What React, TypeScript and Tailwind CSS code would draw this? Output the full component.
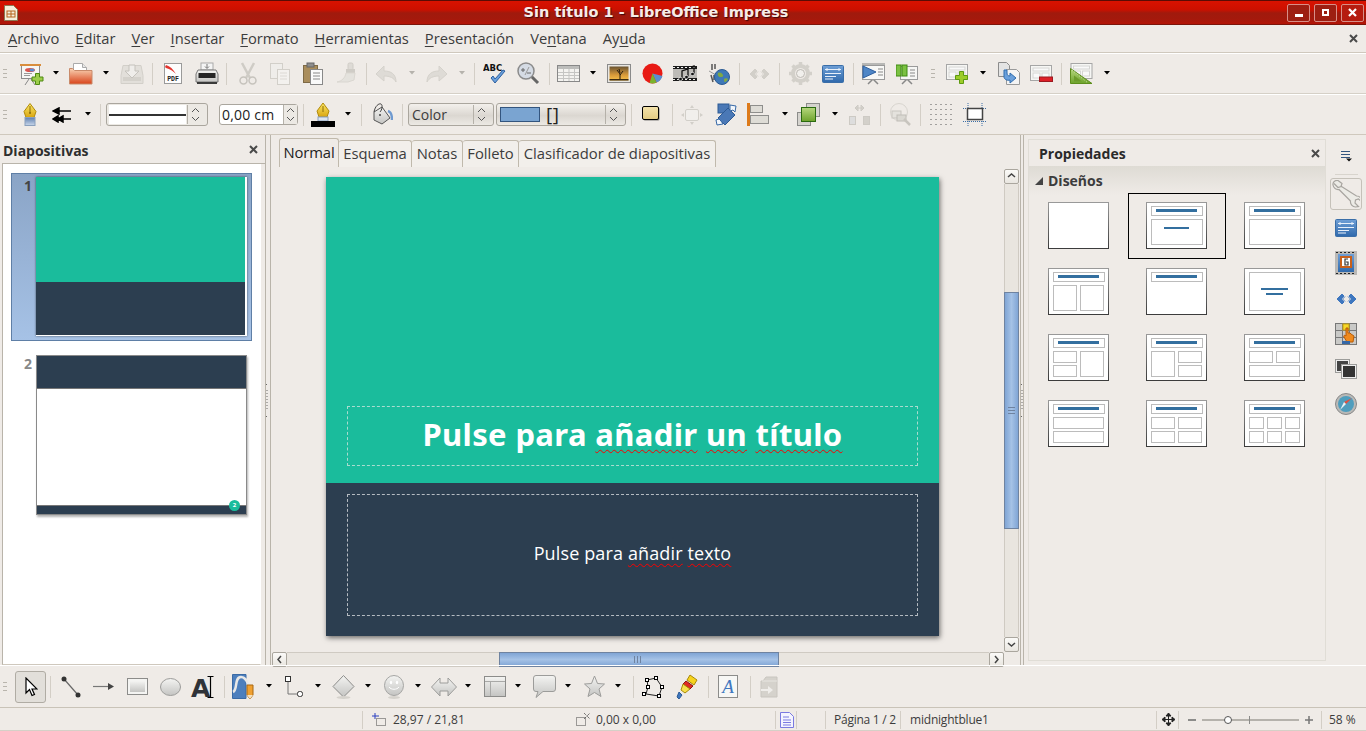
import type { ReactNode } from 'react';
import clsx from 'clsx';

type IconProps = { className?: string };

function Svg({ w, h, className, children }: { w: number; h: number; className?: string; children: ReactNode }) {
    return (
        <svg width={w} height={h} viewBox={`0 0 ${w} ${h}`} className={clsx('shrink-0', className)}>
            {children}
        </svg>
    );
}

/* shared gradients, referenced by the icons below */
function Defs() {
    return (
        <svg width="0" height="0" className="absolute">
            <defs>
                <linearGradient id="lay" x1="0" y1="0" x2="0" y2="1">
                    <stop offset="0" stopColor="#999" />
                    <stop offset="1" stopColor="#3c3c3c" />
                </linearGradient>
                <linearGradient id="folder" x1="0" y1="0" x2="0" y2="1">
                    <stop offset="0" stopColor="#f9d3b4" />
                    <stop offset="1" stopColor="#d8431a" />
                </linearGradient>
                <linearGradient id="tile" x1="0" y1="0" x2="0" y2="1">
                    <stop offset="0" stopColor="#f4f4f2" />
                    <stop offset="1" stopColor="#c4c4c2" />
                </linearGradient>
                <linearGradient id="blueP" x1="0" y1="0" x2="0" y2="1">
                    <stop offset="0" stopColor="#6f9fd6" />
                    <stop offset="1" stopColor="#2f69ac" />
                </linearGradient>
                <linearGradient id="sunset" x1="0" y1="0" x2="0" y2="1">
                    <stop offset="0" stopColor="#6a5330" />
                    <stop offset="0.6" stopColor="#d89a3a" />
                    <stop offset="1" stopColor="#f6c04a" />
                </linearGradient>
                <linearGradient id="greenT" x1="0" y1="0" x2="0" y2="1">
                    <stop offset="0" stopColor="#b6d77e" />
                    <stop offset="1" stopColor="#6ea32c" />
                </linearGradient>
                <linearGradient id="penY" x1="0" y1="0" x2="0" y2="1">
                    <stop offset="0" stopColor="#fbe869" />
                    <stop offset="1" stopColor="#d9a50f" />
                </linearGradient>
                <linearGradient id="penB" x1="0" y1="0" x2="0" y2="1">
                    <stop offset="0" stopColor="#5f7fb0" />
                    <stop offset="1" stopColor="#c9d7ea" />
                </linearGradient>
                <linearGradient id="yel" x1="0" y1="0" x2="0" y2="1">
                    <stop offset="0" stopColor="#f4e3ac" />
                    <stop offset="1" stopColor="#e3cb82" />
                </linearGradient>
            </defs>
        </svg>
    );
}

function Grip({ className }: IconProps) {
    return (
        <Svg w={4} h={9} className={className}>
            <path d="M0 .5h4M0 4.500h4M0 8.500h4" stroke="#b9b5ad" />
        </Svg>
    );
}

function Drop({ className, off }: IconProps & { off?: boolean }) {
    return (
        <Svg w={6} h={4} className={clsx('mb-[2px]', className)}>
            <path d="M0 0h6L3 3.500z" fill={off ? '#b5b2ac' : '#000'} />
        </Svg>
    );
}

function Sep({ className }: IconProps) {
    return <div className={clsx('h-[22px] w-px shrink-0 bg-[#d3cec6]', className)} />;
}

function Close({ className }: IconProps) {
    return (
        <Svg w={9} h={9} className={className}>
            <path d="M1 1l7 7M8 1l-7 7" stroke="#4a4a4a" strokeWidth="2" />
        </Svg>
    );
}

function Chevrons() {
    return (
        <Svg w={9} h={15}>
            <path d="M1 5l3.500-3.500L8 5M1 10l3.500 3.500L8 10" fill="none" stroke="#555" />
        </Svg>
    );
}

/* ---- first toolbar ---- */
function NewPres({ className }: IconProps) {
    return (
        <Svg w={24} h={24} className={className}>
            <path d="M9 17l-4 6M11 17l4 6" stroke="#888" />
            <rect x="1.500" y="3.500" width="18" height="13" fill="#f6f6f4" stroke="#8c8c8c" />
            <rect x="0" y="2" width="21" height="2" fill="#d98d3c" />
            <ellipse cx="10" cy="8" rx="5" ry="2" fill="#d9554f" />
            <ellipse cx="12" cy="8" rx="2.500" ry="1.500" fill="#5a8fcf" />
            <path d="M4 11.500h8M4 13.500h6" stroke="#999" />
            <path d="M15.500 11.500h4v3.500h3.500v4h-3.500v3.500h-4v-3.500H12v-4h3.500z" fill="#9ccc4a" stroke="#4f8a12" />
        </Svg>
    );
}

function OpenFolder({ className }: IconProps) {
    return (
        <Svg w={24} h={24} className={className}>
            <path d="M4.500 1.500h9l4 4v8h-13z" fill="#fff" stroke="#aaa" />
            <path d="M13.500 1.500v4h4" fill="#e8e8e8" stroke="#aaa" />
            <path d="M.5 6.500h3l2 2h17.500v13.500H.5z" fill="url(#folder)" stroke="#c98a6a" />
        </Svg>
    );
}

function SaveOff({ className }: IconProps) {
    return (
        <Svg w={24} h={24} className={className}>
            <path d="M3 3.500h18l2 10v8H1v-8z" fill="#e2dfda" stroke="#d2cfc9" />
            <rect x="3" y="15" width="18" height="4" fill="#d4d1cb" />
            <path d="M9 3h6v6h4l-7 7-7-7h4z" fill="#efedea" stroke="#c5c2bc" />
        </Svg>
    );
}

function Pdf({ className }: IconProps) {
    return (
        <Svg w={18} h={21} className={className}>
            <rect x=".5" y=".5" width="17" height="20" fill="#fdfdfd" stroke="#9a9a9a" />
            <path d="M2 2c4 1 7 4 10 9-3-3-6-5-10-6l-1-1z" fill="#e3352f" />
            <text x="9" y="18" textAnchor="middle" fontSize="6.500" fontWeight="700" fontFamily="Liberation Mono, monospace" fill="#222">PDF</text>
        </Svg>
    );
}

function Printer({ className }: IconProps) {
    return (
        <Svg w={24} h={23} className={className}>
            <rect x="6" y="1" width="12" height="7" fill="#f4f4f4" stroke="#aaa" />
            <path d="M12 2v4M10 4.500l2 2 2-2" stroke="#777" fill="none" />
            <path d="M3 8h18l2 4v8H1v-8z" fill="url(#tile)" stroke="#777" />
            <rect x="3.500" y="11" width="17" height="5" fill="#262626" />
            <rect x="2" y="20" width="20" height="2" fill="#3a3a3a" />
        </Svg>
    );
}

function Cut({ className }: IconProps) {
    return (
        <Svg w={18} h={23} className={className}>
            <path d="M3 1l8 15M15 1L7 16" stroke="#cfccc6" strokeWidth="2.500" />
            <ellipse cx="4.500" cy="18.500" rx="3.500" ry="3.500" fill="none" stroke="#c6c3bd" strokeWidth="1.500" />
            <ellipse cx="13.500" cy="18.500" rx="3.500" ry="3.500" fill="none" stroke="#c6c3bd" strokeWidth="1.500" />
        </Svg>
    );
}

function Copy({ className }: IconProps) {
    return (
        <Svg w={20} h={22} className={className}>
            <rect x=".5" y=".5" width="12" height="15" fill="#efedea" stroke="#d2cfc9" />
            <rect x="7.500" y="6.500" width="12" height="15" fill="#f3f1ee" stroke="#d2cfc9" />
            <path d="M10 10h7M10 13h7M10 16h7" stroke="#dcd9d4" />
        </Svg>
    );
}

function Paste({ className }: IconProps) {
    return (
        <Svg w={20} h={23} className={className}>
            <rect x=".5" y="3.500" width="14" height="17" fill="#a98d5c" stroke="#7e6a46" />
            <rect x="4" y="1" width="7" height="4" fill="#8e8e8e" stroke="#666" />
            <rect x="7.500" y="7.500" width="12" height="15" fill="#fafafa" stroke="#888" />
            <path d="M10 11h7M10 14h7M10 17h7" stroke="#888" />
        </Svg>
    );
}

function Brush({ className }: IconProps) {
    return (
        <Svg w={20} h={23} className={className}>
            <rect x="12" y="1" width="5" height="7" rx="1.500" fill="#dedbd6" stroke="#cfccc6" />
            <rect x="10" y="7" width="9" height="4" fill="#cfccc6" />
            <path d="M10 11h9l-1 7-6 2H1c5-1 8-4 9-9z" fill="#e4e2dd" stroke="#dad7d1" />
        </Svg>
    );
}

function Undo({ className, flip }: IconProps & { flip?: boolean }) {
    return (
        <Svg w={22} h={18} className={className}>
            <path
                d="M1 9l8-8v5c7 0 12 3 12 11-2-4-6-6-12-6v5z"
                fill="#dedbd6"
                stroke="#d5d2cc"
                transform={flip ? 'matrix(-1 0 0 1 22 0)' : undefined}
            />
        </Svg>
    );
}

function Spell({ className }: IconProps) {
    return (
        <Svg w={24} h={22} className={className}>
            <text x="0" y="8" fontSize="8.500" fontWeight="700" fontFamily="DejaVu Sans, sans-serif" fill="#111">ABC</text>
            <path d="M8 15l4 5L22 8l-2-1-8 9-2-3z" fill="#6aa0dc" stroke="#2d5f9f" />
        </Svg>
    );
}

function ZoomOff({ className }: IconProps) {
    return (
        <Svg w={23} h={23} className={className}>
            <path d="M14 14l7 7" stroke="#666" strokeWidth="3" />
            <circle cx="9" cy="9" r="8" fill="#d5dbe4" stroke="#8b8b8b" strokeWidth="1.500" />
            <path d="M4 8h4M6 6v4M10 11h4" stroke="#666" />
            <path d="M12 5l-4 8" stroke="#999" />
        </Svg>
    );
}

function TableIc({ className }: IconProps) {
    return (
        <Svg w={23} h={17} className={className}>
            <rect x=".5" y=".5" width="22" height="16" fill="#f4f3f0" stroke="#888" />
            <rect x="1" y="1" width="21" height="3" fill="#bdbdbb" />
            <path d="M1 7.500h21M1 10.500h21M1 13.500h21M6.500 4v12M12 4v12M17.500 4v12" stroke="#c5c5c3" />
        </Svg>
    );
}

function ImageIc({ className }: IconProps) {
    return (
        <Svg w={24} h={19} className={className}>
            <rect x=".5" y=".5" width="23" height="18" fill="#e8e6e2" stroke="#8a8a8a" />
            <rect x="2.500" y="2.500" width="19" height="14" fill="url(#sunset)" />
            <path d="M13 16v-6l-3-4M13 11l3-4M13 9l-1-4" stroke="#241a0c" strokeWidth="1" fill="none" />
            <rect x="2.500" y="15" width="19" height="1.500" fill="#3a2a12" />
        </Svg>
    );
}

function Pie({ className }: IconProps) {
    return (
        <Svg w={21} h={21} className={className}>
            <circle cx="10.500" cy="10.500" r="10" fill="#e81a14" />
            <path d="M10.500 10.500L20.500 13a10 10 0 0 1-6 6.500z" fill="#5b8fcf" />
            <path d="M10.500 10.500l4 9a10 10 0 0 1-7 .5z" fill="#7ab32e" />
        </Svg>
    );
}

function Film({ className }: IconProps) {
    return (
        <Svg w={24} h={21} className={className}>
            <rect x="0" y="3" width="24" height="15" fill="#bdbbb7" />
            <path d="M0 4.500h24M0 16.500h24" stroke="#1c1c1c" strokeWidth="3" />
            <path d="M0 4.500h24M0 16.500h24" stroke="#f2f2f0" strokeDasharray="2 2" />
            <path d="M9 16V8l6-2v8M21 11V3l-3 1" fill="none" stroke="#111" strokeWidth="1.300" />
            <ellipse cx="7.500" cy="16" rx="2" ry="1.600" fill="#111" stroke="#fff" strokeWidth="0.600" />
            <ellipse cx="13.500" cy="14" rx="2" ry="1.600" fill="#111" stroke="#fff" strokeWidth="0.600" />
            <ellipse cx="19.500" cy="11" rx="2" ry="1.600" fill="#111" stroke="#fff" strokeWidth="0.600" />
        </Svg>
    );
}

function Globe({ className }: IconProps) {
    return (
        <Svg w={21} h={22} className={className}>
            <path d="M3 1v6M6 1v5M2 12l2 7M5 12v5" stroke="#555" strokeWidth="1.500" />
            <path d="M0 8l7 4" stroke="#999" />
            <circle cx="13" cy="14" r="7.500" fill="#3d78b8" stroke="#2c5b93" />
            <path d="M9 10c2-1 4 0 5 2s-2 2-3 2-3-2-2-4zM15 16c1-1 3-1 4 0-1 2-2 3-3 3s-1-2-1-3z" fill="#7fa844" />
        </Svg>
    );
}

function CodeOff({ className, color = '#d2cfc9' }: IconProps & { color?: string }) {
    return (
        <Svg w={21} h={12} className={className}>
            <path d="M6 1L1 6l5 5 2-2-3-3 3-3zM15 1l5 5-5 5-2-2 3-3-3-3z" fill={color} stroke={color} />
            <path d="M9 3.500L6.500 6 9 8.500M12 3.500L14.500 6 12 8.500" fill="none" stroke={color} />
        </Svg>
    );
}

function Gear({ className }: IconProps) {
    return (
        <Svg w={23} h={23} className={className}>
            <circle cx="11.500" cy="11.500" r="7.500" fill="none" stroke="#d3d0ca" strokeWidth="4" />
            <path
                d="M11.500 0v4M11.500 19v4M0 11.500h4M19 11.500h4M3.500 3.500l3 3M16.500 16.500l3 3M19.500 3.500l-3 3M6.500 16.500l-3 3"
                stroke="#d3d0ca"
                strokeWidth="3.500"
            />
            <circle cx="11.500" cy="11.500" r="4" fill="#f1efec" stroke="#bdbab4" />
        </Svg>
    );
}

function BluePanel({ className }: IconProps) {
    return (
        <Svg w={22} h={18} className={className}>
            <rect x=".5" y=".5" width="21" height="17" rx="1" fill="url(#blueP)" stroke="#3a6ea8" />
            <path d="M3 4.500h16M3 8.500h16M3 11.500h11M3 14h8" stroke="#e8f0fa" />
            <path d="M5 3v3M17 3v3" stroke="#e8f0fa" />
        </Svg>
    );
}

function PresentIc({ className }: IconProps) {
    return (
        <Svg w={23} h={23} className={className}>
            <path d="M11 17l-5 5M11 17l5 5" stroke="#888" strokeWidth="1.500" />
            <rect x=".5" y="3.500" width="22" height="14" fill="#f8f8f6" stroke="#9a9a9a" />
            <rect x="0" y="1" width="23" height="2" fill="#b8b8b6" />
            <path d="M1 4l13 6-13 6z" fill="#4f86c6" stroke="#2d5f9f" />
            <path d="M16 7h5M16 10h5M16 13h5" stroke="#888" />
        </Svg>
    );
}

function SortIc({ className }: IconProps) {
    return (
        <Svg w={22} h={23} className={className}>
            <path d="M11 17l-5 5M11 17l5 5" stroke="#888" strokeWidth="1.500" />
            <rect x="4.500" y="4.500" width="17" height="13" fill="#f6f6f4" stroke="#9a9a9a" />
            <rect x="0" y="3" width="5" height="11" fill="#7bc142" stroke="#3f8a12" />
            <rect x="6" y="3" width="5" height="11" fill="#7bc142" stroke="#3f8a12" />
            <path d="M14 8h5M14 11h5M14 14h5" stroke="#888" />
        </Svg>
    );
}

function SlideBox() {
    return (
        <>
            <rect x=".5" y=".5" width="21" height="15" fill="#f6f6f4" stroke="#a6a6a6" strokeWidth="1" />
            <rect x="3" y="3" width="16" height="3" fill="#f9f9f9" stroke="#d5d5d3" />
            <rect x="3" y="8" width="7" height="5" fill="#f9f9f9" stroke="#d5d5d3" />
            <rect x="12" y="8" width="7" height="5" fill="#f9f9f9" stroke="#d5d5d3" />
        </>
    );
}

function NewSlide({ className }: IconProps) {
    return (
        <Svg w={23} h={20} className={className}>
            <SlideBox />
            <path d="M13.500 7.500h4v4h4v4h-4v4h-4v-4h-4v-4h4z" fill="#9ccc2a" stroke="#5d9a10" />
        </Svg>
    );
}

function DupSlide({ className }: IconProps) {
    return (
        <Svg w={22} h={23} className={className}>
            <path d="M.5 .5h8l3 3v11H.5z" fill="#e4e4e4" stroke="#8c8c8c" />
            <path d="M8.500 7.500h10l3 3v12h-13z" fill="#f4f4f4" stroke="#9a9a9a" />
            <path d="M6 8v7c0 2 3 4 6 3v3l6-5-6-5v3c-2 0-3-1-3-3V8z" fill="#6aa0dc" stroke="#2f6cae" />
        </Svg>
    );
}

function DelSlide({ className }: IconProps) {
    return (
        <Svg w={23} h={17} className={className}>
            <SlideBox />
            <rect x="9.500" y="12" width="13" height="4.500" fill="#dd1f27" stroke="#9c1a20" />
        </Svg>
    );
}

function TriSlide({ className }: IconProps) {
    return (
        <Svg w={23} h={22} className={className}>
            <g transform="translate(0.5 0)">
                <SlideBox />
            </g>
            <path d="M.5 5.500l21.500 15H.5z" fill="url(#greenT)" stroke="#5d8e1c" />
            <path d="M4 12.500l8 6H4z" fill="#6c9b2c" />
            <path d="M2 7l16 13" stroke="#d5e8b5" strokeDasharray="1 2" />
        </Svg>
    );
}

/* ---- second toolbar ---- */
function Pen({ className }: IconProps) {
    return (
        <Svg w={16} h={23} className={className}>
            <path d="M8 .5l6 8-2 6H4l-2-6z" fill="url(#penY)" stroke="#b18a0a" />
            <path d="M8 3v7" stroke="#8b6d08" />
            <circle cx="8" cy="10" r="1" fill="#8b6d08" />
            <rect x="3" y="14.500" width="10" height="8" fill="url(#penB)" stroke="#8aa0bd" />
        </Svg>
    );
}

function ArrowStyle({ className }: IconProps) {
    return (
        <Svg w={20} h={16} className={className}>
            <path d="M19 4H7M7 1L1 4l6 3zM19 12H11M11 9l-5 3 5 3zM6 9l-5 3 5 3z" fill="#000" stroke="#000" strokeWidth="1.500" />
        </Svg>
    );
}

function PenBlack({ className }: IconProps) {
    return (
        <Svg w={24} h={24} className={className}>
            <path d="M12 0l6 8-2 6H8L6 8z" fill="url(#penY)" stroke="#b18a0a" />
            <path d="M12 3v6" stroke="#8b6d08" />
            <rect x="7" y="14" width="10" height="4" fill="#dbe4ef" stroke="#8aa0bd" />
            <rect x="0" y="18" width="24" height="6" fill="#000" />
        </Svg>
    );
}

function Bucket({ className }: IconProps) {
    return (
        <Svg w={22} h={23} className={className}>
            <path d="M17 8c3 1 4 3 4 9" fill="none" stroke="#6f9ad0" strokeWidth="2.500" />
            <path d="M3 9L11 4l8 11-8 6-8-4z" fill="url(#tile)" stroke="#555" />
            <path d="M3 9c1-6 5-9 7-8s1 6-1 8" fill="none" stroke="#444" />
            <circle cx="9" cy="12" r="1" fill="#444" />
        </Svg>
    );
}

function LineCombo({ className }: IconProps) {
    return (
        <div className={clsx('flex h-[23px] w-[102px] shrink-0 items-center rounded-[3px] border border-[#aaa69e] bg-[#ece9e4] pl-[2px]', className)}>
            <div className="flex h-[19px] w-[77px] items-center bg-white">
                <div className="h-[2px] w-full bg-[#333]" />
            </div>
            <div className="ml-[1px] h-[19px] w-px bg-[#b5b1a9]" />
            <div className="ml-[3px]">
                <Chevrons />
            </div>
        </div>
    );
}

function SpinField({ className }: IconProps) {
    return (
        <div className={clsx('flex h-[21px] w-[79px] shrink-0 items-center rounded-[3px] border border-[#aaa69e] bg-white pl-[2px]', className)}>
            <span className="w-[62px] text-[14px] tracking-[0.2px] text-[#222]">0,00 cm</span>
            <div className="flex h-[19px] w-[14px] items-center justify-center border-l border-[#b5b1a9] bg-[#ece9e4]">
                <Chevrons />
            </div>
        </div>
    );
}

function Combo({ className, width, children }: IconProps & { width: string; children: ReactNode }) {
    return (
        <div
            className={clsx(
                'flex h-[23px] shrink-0 items-center rounded-[3px] border border-[#aaa69e] bg-[linear-gradient(to_bottom,#f3f0ec,#dbd7d1_55%,#ece9e4)]',
                width,
                className,
            )}
        >
            {children}
            <div className="h-[19px] w-px bg-[#b5b1a9]" />
            <div className="ml-[3px]">
                <Chevrons />
            </div>
        </div>
    );
}

function YellowBox({ className }: IconProps) {
    return (
        <Svg w={18} h={15} className={clsx('mb-[3px]', className)}>
            <rect x="1.500" y="1.500" width="16" height="13" rx="1.500" fill="#333" opacity="0.6" />
            <rect x=".5" y=".5" width="16" height="13" rx="1.500" fill="url(#yel)" stroke="#000" />
        </Svg>
    );
}

function PointsOff({ className }: IconProps) {
    return (
        <Svg w={22} h={20} className={className}>
            <rect x="4.500" y="4.500" width="13" height="11" rx="1.500" fill="#f1efec" stroke="#d2cfc9" />
            <path d="M11 0l-2 3h4zM11 20l-2-3h4zM0 10l3-2v4zM22 10l-3-2v4z" fill="#d2cfc9" />
        </Svg>
    );
}

function Rotate({ className }: IconProps) {
    return (
        <Svg w={23} h={23} className={className}>
            <rect x="3" y="1" width="11" height="9" fill="#4a78b6" stroke="#2d5a94" />
            <path d="M3 15L13 5l7 7-10 10z" fill="#4a78b6" stroke="#2d5a94" />
            <path d="M15 2l6 1-1 6-2-2-3 1z" fill="#f2f6fb" stroke="#3668a6" />
            <path d="M1 17l3-1 2 2 2 3-6 1z" fill="#f2f6fb" stroke="#3668a6" />
        </Svg>
    );
}

function AlignIc({ className }: IconProps) {
    return (
        <Svg w={22} h={23} className={className}>
            <rect x="0" y="0" width="3" height="23" fill="#dd7a1a" />
            <rect x="3.500" y="2.500" width="12" height="7" fill="#dedcd6" stroke="#8e8e8c" />
            <rect x="3.500" y="12.500" width="18" height="8" fill="#dedcd6" stroke="#8e8e8c" />
        </Svg>
    );
}

function Arrange({ className }: IconProps) {
    return (
        <Svg w={23} h={23} className={className}>
            <rect x="9.500" y=".5" width="13" height="13" fill="#d5d3ce" stroke="#8c8c8a" />
            <rect x=".5" y="9.500" width="13" height="13" fill="#d5d3ce" stroke="#8c8c8a" />
            <rect x="4.500" y="4.500" width="14" height="14" fill="url(#greenT)" stroke="#2a6a10" />
        </Svg>
    );
}

function DistribOff({ className }: IconProps) {
    return (
        <Svg w={23} h={22} className={className}>
            <path d="M7 4h9M7 4l3-3v6zM16 4l-3-3v6z" fill="#d8d5cf" stroke="#cdcac4" />
            <rect x="1.500" y="12.500" width="6" height="8" fill="#ddd" stroke="#cdcac4" />
            <rect x="15.500" y="12.500" width="6" height="8" fill="#d3d0ca" stroke="#cdcac4" />
        </Svg>
    );
}

function GlueOff({ className }: IconProps) {
    return (
        <Svg w={21} h={23} className={className}>
            <circle cx="9" cy="9" r="8.500" fill="none" stroke="#d8d5cf" />
            <rect x="2" y="8" width="9" height="7" fill="#e4e2dd" stroke="#c8c5bf" />
            <rect x="7" y="12" width="9" height="6" fill="#dad8d2" stroke="#c0bdb7" />
            <path d="M14 16l6 6" stroke="#c8c5bf" strokeWidth="2.500" />
        </Svg>
    );
}

function Dots({ className }: IconProps) {
    return (
        <Svg w={23} h={22} className={className}>
            <path d="M.5 .5h22M.5 5.500h22M.5 10.500h22M.5 15.500h22M.5 20.500h22" stroke="#555" strokeDasharray="1 4" />
        </Svg>
    );
}

function FrameIc({ className }: IconProps) {
    return (
        <Svg w={24} h={24} className={className}>
            <path d="M5 0v24M19 0v24M0 5.500h24M0 18.500h24" stroke="#3c6ea6" strokeDasharray="1 1" />
            <rect x="4.500" y="5.500" width="15" height="11" fill="#fff" stroke="#444" strokeWidth="1.500" />
        </Svg>
    );
}

/* ---- drawing toolbar ---- */
function Cursor() {
    return (
        <Svg w={14} h={20}>
            <path d="M2 1v15l3.500-3.500L8 18.500l2.500-1-2.500-5.500h5z" fill="#fff" stroke="#000" strokeWidth="1.200" />
        </Svg>
    );
}

function LineIc({ className }: IconProps) {
    return (
        <Svg w={20} h={22} className={className}>
            <path d="M3 3l14 16" stroke="#666" strokeWidth="1.200" />
            <circle cx="3" cy="3" r="2.500" fill="#333" />
            <circle cx="17" cy="19" r="2.500" fill="#333" />
        </Svg>
    );
}

function ArrowIc({ className }: IconProps) {
    return (
        <Svg w={21} h={9} className={className}>
            <path d="M0 4.500h16" stroke="#777" strokeWidth="1.200" />
            <path d="M15 1l6 3.500-6 3.500z" fill="#444" />
        </Svg>
    );
}

function RectIc({ className }: IconProps) {
    return (
        <Svg w={21} h={17} className={className}>
            <rect x=".5" y=".5" width="20" height="16" fill="#f4f4f2" stroke="#8c8c8a" />
            <rect x="3" y="3" width="15" height="11" fill="url(#tile)" />
        </Svg>
    );
}

function EllipseIc({ className }: IconProps) {
    return (
        <Svg w={21} h={18} className={className}>
            <ellipse cx="10.500" cy="9" rx="10" ry="8.500" fill="url(#tile)" stroke="#9c9c9a" />
        </Svg>
    );
}

function TextIc({ className }: IconProps) {
    return (
        <Svg w={23} h={24} className={clsx('overflow-visible', className)}>
            <text x="-1" y="22" fontSize="25" fontWeight="700" fontFamily="DejaVu Sans, sans-serif" fill="#2f3338">A</text>
            <path d="M15.500 1.500h6M15.500 22.500h6M18.500 2v20" stroke="#000" strokeWidth="1.200" />
        </Svg>
    );
}

function CurveIc({ className }: IconProps) {
    return (
        <Svg w={24} h={25} className={className}>
            <path d="M.5 .5H14v24H.5z" fill="#4d7fbd" stroke="#3a6aa5" />
            <path d="M1 18C6 16 2 3 9 3c5 0 6 5 8 9" fill="none" stroke="#e8e8e8" strokeWidth="2.500" />
            <path d="M15 11h6v10l-3 4-3-4z" fill="#f0a030" stroke="#a86812" />
            <path d="M15 21l3 4 3-4z" fill="#f5e1c0" />
        </Svg>
    );
}

function ConnIc({ className }: IconProps) {
    return (
        <Svg w={20} h={24} className={className}>
            <path d="M4 5v14h10" fill="none" stroke="#777" />
            <rect x="1.500" y="1.500" width="5" height="5" fill="#fff" stroke="#333" />
            <rect x="13.500" y="16.500" width="5" height="5" rx="2" fill="#fff" stroke="#333" />
        </Svg>
    );
}

function DiamondIc({ className }: IconProps) {
    return (
        <Svg w={23} h={24} className={className}>
            <path d="M11.500 .5L22 11.500 11.500 22 1 11.500z" fill="url(#tile)" stroke="#8c8c8a" />
            <ellipse cx="11.500" cy="22.500" rx="7" ry="1.500" fill="#d5d2cc" />
        </Svg>
    );
}

function SmileIc({ className }: IconProps) {
    return (
        <Svg w={20} h={24} className={className}>
            <ellipse cx="10" cy="10.500" rx="9.500" ry="10" fill="url(#tile)" stroke="#a5a5a3" />
            <ellipse cx="7" cy="7.500" rx="1.200" ry="1.700" fill="#fff" />
            <ellipse cx="13" cy="7.500" rx="1.200" ry="1.700" fill="#fff" />
            <path d="M5 12c2 3 8 3 10 0" fill="none" stroke="#fff" />
            <ellipse cx="10" cy="22.500" rx="6" ry="1.500" fill="#d5d2cc" />
        </Svg>
    );
}

function BlockArrowIc({ className }: IconProps) {
    return (
        <Svg w={26} h={20} className={className}>
            <path d="M.5 10L9 1v5h8V1l8.500 9-8.500 9v-5H9v5z" fill="url(#tile)" stroke="#9c9c9a" />
        </Svg>
    );
}

function FlowIc({ className }: IconProps) {
    return (
        <Svg w={22} h={21} className={className}>
            <rect x=".5" y=".5" width="21" height="20" fill="url(#tile)" stroke="#8c8c8a" />
            <path d="M1 5.500h20M6.500 6v14" stroke="#a9a9a7" />
        </Svg>
    );
}

function CalloutIc({ className }: IconProps) {
    return (
        <Svg w={23} h={23} className={className}>
            <path d="M3 .5h17a2.500 2.500 0 0 1 2.500 2.500v11a2.500 2.500 0 0 1-2.500 2.500H10l-7 6 2-6H3A2.500 2.500 0 0 1 .5 14V3A2.500 2.500 0 0 1 3 .5z" fill="url(#tile)" stroke="#9c9c9a" />
        </Svg>
    );
}

function StarIc({ className }: IconProps) {
    return (
        <Svg w={21} h={24} className={className}>
            <path d="M10.500 1l3 7.500 7 .5-5.500 5 2 7.500-6.500-4-6.500 4 2-7.500L.5 9l7-.5z" fill="url(#tile)" stroke="#9c9c9a" />
        </Svg>
    );
}

function PointsIc({ className }: IconProps) {
    return (
        <Svg w={22} h={22} className={className}>
            <path d="M5 4l9-2 6 9-3 9-13-2 2-7z" fill="none" stroke="#222" />
            <g fill="#fff" stroke="#000">
                <rect x="3.500" y="2.500" width="3" height="3" />
                <rect x="12.500" y=".5" width="3" height="3" />
                <rect x="18.500" y="9.500" width="3" height="3" />
                <rect x="15.500" y="18.500" width="3" height="3" />
                <rect x=".5" y="16.500" width="3" height="3" />
                <rect x="4.500" y="9.500" width="3" height="3" />
            </g>
        </Svg>
    );
}

function GluePen({ className }: IconProps) {
    return (
        <Svg w={22} h={25} className={className}>
            <path d="M14 1l7 5-3 5-7-5z" fill="#f7d31e" stroke="#a88a0c" />
            <path d="M10 7l7 5-3 3-7-5z" fill="#e02a22" stroke="#8e1710" />
            <path d="M7 10l7 5-5 4-4-3z" fill="#f8e04a" stroke="#a88a0c" />
            <path d="M3 18l3 3-3 4-2-2z" fill="#3f77bf" stroke="#2c5a94" />
        </Svg>
    );
}

function FontworkIc({ className }: IconProps) {
    return (
        <Svg w={20} h={24} className={className}>
            <rect x=".5" y=".5" width="19" height="22" fill="#f7f7f5" stroke="#8c8c8a" />
            <text x="10" y="18" textAnchor="middle" fontSize="19" fontStyle="italic" fontFamily="Liberation Serif, serif" fill="#3f77bf">A</text>
        </Svg>
    );
}

function ExtrudeOff({ className }: IconProps) {
    return (
        <Svg w={18} h={22} className={className}>
            <path d="M3 5l3-4h11v20H1V5z" fill="#d5d2cc" stroke="#c8c5bf" />
            <path d="M2 5h15" stroke="#e7e5e0" />
            <path d="M1 13h7v-3l5 4-5 4v-3H1z" fill="#efedea" />
        </Svg>
    );
}

/* ---- side tab bar ---- */
function Wrench() {
    return (
        <Svg w={28} h={28}>
            <path
                d="M2 3.500L6 7.500l3-1 1-3L6 .5C3 0 .5 2 1 5c.5 3 3 5 6 4.500L18.500 21c-.5 3 2 6 5 6l3-.5-3.500-3.500.5-3 3-1 3.500 3c.5-3-2-6-5.500-6L9.500 6.500"
                fill="#ecebe6"
                stroke="#a8a5a0"
                strokeWidth="1.200"
            />
        </Svg>
    );
}

function FilmTab() {
    return (
        <Svg w={22} h={24}>
            <rect x="0" y="0" width="22" height="24" fill="#5a5a58" opacity="0.35" />
            <rect x="3" y="3" width="16" height="18" fill="url(#blueP)" />
            <rect x="6" y="6" width="10" height="10" fill="#fff" stroke="#c9601a" strokeWidth="2" />
            <path d="M13 8h-3v6h3v-3h-2" fill="none" stroke="#333" strokeWidth="1.200" />
            <path d="M1 1.500h20M1 22.500h20" stroke="#222" strokeDasharray="2 2" />
        </Svg>
    );
}

function GridHand() {
    return (
        <Svg w={22} h={22}>
            <rect x=".5" y=".5" width="21" height="21" fill="#c9c9c7" stroke="#777" />
            <path d="M7.500 1v20M14.500 1v20M1 7.500h20M1 14.500h20" stroke="#777" />
            <rect x="8" y="1" width="6" height="6" fill="#f6d82a" stroke="#c9a20c" />
            <path d="M11 5v8c-1-1-3-1-2 1l3 5h6l1-6-3-2-1-1-2 0V5z" fill="#f08a1d" stroke="#b85d08" />
            <rect x="7" y="18" width="8" height="3" fill="#3668a6" />
        </Svg>
    );
}

function WindowsTab() {
    return (
        <Svg w={22} h={20}>
            <rect x=".5" y=".5" width="14" height="13" fill="#eee" stroke="#9c9c9a" />
            <rect x="2" y="2" width="11" height="10" fill="#444" />
            <rect x="6.500" y="5.500" width="15" height="14" fill="#eee" stroke="#9c9c9a" />
            <rect x="8" y="7" width="12" height="11" fill="#333" />
        </Svg>
    );
}

function Compass() {
    return (
        <Svg w={22} h={22}>
            <circle cx="11" cy="11" r="10.500" fill="#b9b9b7" stroke="#888" />
            <circle cx="11" cy="11" r="8" fill="#4f9dbd" />
            <path d="M17 5l-8 4 2 2z" fill="#e2503f" />
            <path d="M5 17l4-8 2 2z" fill="#e8f2f6" />
        </Svg>
    );
}

/* ---- layouts ---- */
type Box = [number, number, number, number];
const HEAD: Box = [5.5, 4.5, 51, 9];
const LAYOUTS: { boxes: Box[]; bars: Box[] }[] = [
    { boxes: [], bars: [] },
    { boxes: [HEAD, [5.5, 17.5, 51, 25]], bars: [[10, 7, 41, 3], [18, 25, 25, 2]] },
    { boxes: [HEAD, [5.5, 17.5, 51, 25]], bars: [[10, 7, 41, 3]] },
    { boxes: [HEAD, [5.5, 17.5, 23, 25], [32.5, 17.5, 23, 25]], bars: [[10, 7, 41, 3]] },
    { boxes: [HEAD], bars: [[10, 7, 41, 3]] },
    { boxes: [[5.5, 4.5, 51, 38]], bars: [[17, 20, 27, 2], [22, 25, 17, 2]] },
    { boxes: [HEAD, [5.5, 17.5, 23, 11], [5.5, 31.5, 23, 11], [32.5, 17.5, 23, 25]], bars: [[10, 7, 41, 3]] },
    { boxes: [HEAD, [5.5, 17.5, 23, 25], [32.5, 17.5, 23, 11], [32.5, 31.5, 23, 11]], bars: [[10, 7, 41, 3]] },
    { boxes: [HEAD, [5.5, 17.5, 23, 11], [32.5, 17.5, 23, 11], [5.5, 31.5, 50, 11]], bars: [[10, 7, 41, 3]] },
    { boxes: [HEAD, [5.5, 17.5, 50, 11], [5.5, 31.5, 50, 11]], bars: [[10, 7, 41, 3]] },
    { boxes: [HEAD, [5.5, 17.5, 23, 11], [32.5, 17.5, 23, 11], [5.5, 31.5, 23, 11], [32.5, 31.5, 23, 11]], bars: [[10, 7, 41, 3]] },
    {
        boxes: [HEAD, [5.5, 17.5, 14, 11], [23.5, 17.5, 14, 11], [41.5, 17.5, 14, 11], [5.5, 31.5, 14, 11], [23.5, 31.5, 14, 11], [41.5, 31.5, 14, 11]],
        bars: [[10, 7, 41, 3]],
    },
];

function LayoutThumb({ boxes, bars }: { boxes: Box[]; bars: Box[] }) {
    return (
        <Svg w={61} h={47}>
            <rect x=".5" y=".5" width="60" height="46" fill="#fff" stroke="url(#lay)" />
            {boxes.map((b, i) => (
                <rect key={i} x={b[0]} y={b[1]} width={b[2]} height={b[3]} fill="none" stroke="#bcbcbc" />
            ))}
            {bars.map((b, i) => (
                <rect key={i} x={b[0]} y={b[1]} width={b[2]} height={b[3]} fill="#336f9f" />
            ))}
        </Svg>
    );
}

function ScrollBtn({ dir, className }: IconProps & { dir: 'up' | 'down' | 'left' | 'right' }) {
    const d = { up: 'M4 8l3.500-3L11 8', down: 'M4 6l3.500 3L11 6', left: 'M9 4L6 7.500 9 11', right: 'M6 4l3 3.500L6 11' }[dir];
    return (
        <div className={clsx('h-[15px] w-[15px] shrink-0 rounded-[2px] border border-[#aaa69e] bg-[linear-gradient(to_bottom,#fbfaf8,#e9e6e0)]', className)}>
            <svg width="13" height="13" viewBox="1 1 13 13">
                <path d={d} fill="none" stroke="#444" strokeWidth="1.500" />
            </svg>
        </div>
    );
}

const MENUS: [string, string, string][] = [
    ['', 'A', 'rchivo'],
    ['', 'E', 'ditar'],
    ['', 'V', 'er'],
    ['', 'I', 'nsertar'],
    ['', 'F', 'ormato'],
    ['', 'H', 'erramientas'],
    ['', 'P', 'resentación'],
    ['Ve', 'n', 'tana'],
    ['Ay', 'u', 'da'],
];

const TABS = [
    { label: 'Esquema', width: 'w-[73px]' },
    { label: 'Notas', width: 'w-[51px]' },
    { label: 'Folleto', width: 'w-[56px]' },
    { label: 'Clasificador de diapositivas', width: 'w-[197px]' },
];

const WAVE = 'underline decoration-wavy decoration-[#ff0000] decoration-[1px] underline-offset-[3px]';

export default function App() {
    return (
        <div className="flex h-[731px] w-[1366px] flex-col overflow-hidden bg-[#efebe7] font-['Open_Sans',sans-serif] text-[#333]">
            <Defs />

            {/* title bar */}
            <div className="flex h-[25px] shrink-0 items-center border-y border-t-[#5a0c05] border-b-[#7c140a] bg-[linear-gradient(to_bottom,#d91200,#cb1000_38%,#a01a0d_52%,#a4190c_78%,#b41407)] pl-[4px]">
                <Svg w={14} h={16}>
                    <path d="M.5 .5h9l4 4v11H.5z" fill="#f5efdc" stroke="#8c7a55" />
                    <rect x="3" y="6" width="8" height="6" fill="#f5efdc" stroke="#b5641c" />
                    <path d="M3 9h8M7 6v6" stroke="#b5641c" />
                </Svg>
                <div className="flex-1 pl-[7px] text-center font-['DejaVu_Sans',sans-serif] text-[14.500px] font-bold text-[#f6ece8] [text-shadow:1px_1px_1px_#40060a]">
                    Sin título 1 - LibreOffice Impress
                </div>
                <div className="mr-[2px] flex gap-[4px]">
                    <div className="flex h-[18px] w-[23px] items-end justify-center rounded-[2px] border border-[#d88f88] bg-[#9d1f12] pb-[4px]">
                        <div className="h-[3px] w-[8px] bg-white" />
                    </div>
                    <div className="flex h-[18px] w-[23px] items-center justify-center rounded-[2px] border border-[#d88f88] bg-[#9d1f12]">
                        <div className="h-[7px] w-[7px] border-2 border-white" />
                    </div>
                    <div className="flex h-[18px] w-[23px] items-center justify-center rounded-[2px] border border-[#d88f88] bg-[#b51c0f]">
                        <Svg w={9} h={9}>
                            <path d="M1 1l7 7M8 1l-7 7" stroke="#fff" strokeWidth="2.200" />
                        </Svg>
                    </div>
                </div>
            </div>

            {/* menu bar */}
            <div className="flex h-[28px] shrink-0 items-center gap-[16px] border-b border-[#cfc8bd] pl-[8px] text-[14.700px] text-[#3c3c3c]">
                {MENUS.map(([pre, key, rest]) => (
                    <span key={pre + key + rest}>
                        {pre}
                        <span className="underline underline-offset-2">{key}</span>
                        {rest}
                    </span>
                ))}
                <Close className="ml-auto mr-[8px]" />
            </div>

            {/* standard toolbar */}
            <div className="flex h-[41px] shrink-0 items-center border-t border-b border-t-white border-b-[#d5d0c7]">
                <Grip className="ml-[3px]" />
                <NewPres className="ml-[13px]" />
                <Drop className="ml-[9px]" />
                <OpenFolder className="ml-[10px]" />
                <Drop className="ml-[10px]" />
                <SaveOff className="ml-[11px]" />
                <Sep className="ml-[8px]" />
                <Pdf className="ml-[11px]" />
                <Printer className="ml-[13px]" />
                <Sep className="ml-[7px]" />
                <Cut className="ml-[12px]" />
                <Copy className="ml-[13px]" />
                <Paste className="ml-[13px]" />
                <Brush className="ml-[13px]" />
                <Sep className="ml-[10px]" />
                <Undo className="ml-[8px]" />
                <Drop off className="ml-[12px]" />
                <Undo flip className="ml-[11px]" />
                <Drop off className="ml-[11px]" />
                <Sep className="ml-[9px]" />
                <Spell className="ml-[8px]" />
                <ZoomOff className="ml-[10px]" />
                <Sep className="ml-[9px]" />
                <TableIc className="ml-[7px]" />
                <Drop className="ml-[10px]" />
                <ImageIc className="ml-[11px]" />
                <Pie className="ml-[11px]" />
                <Film className="ml-[10px]" />
                <Globe className="ml-[12px]" />
                <Sep className="ml-[9px]" />
                <CodeOff className="ml-[9px]" />
                <Sep className="ml-[9px]" />
                <Gear className="ml-[9px]" />
                <BluePanel className="ml-[10px]" />
                <Sep className="ml-[9px]" />
                <PresentIc className="ml-[8px]" />
                <SortIc className="ml-[11px]" />
                <Grip className="ml-[13px]" />
                <NewSlide className="ml-[11px]" />
                <Drop className="ml-[11px]" />
                <DupSlide className="ml-[12px]" />
                <DelSlide className="ml-[10px]" />
                <Sep className="ml-[8px]" />
                <TriSlide className="ml-[8px]" />
                <Drop className="ml-[11px]" />
            </div>

            {/* line and filling toolbar */}
            <div className="flex h-[41px] shrink-0 items-center border-t border-b border-t-white border-b-[#cfc8bd]">
                <Grip className="ml-[3px]" />
                <Pen className="ml-[15px]" />
                <ArrowStyle className="ml-[14px]" />
                <Drop className="ml-[13px]" />
                <Sep className="ml-[9px]" />
                <LineCombo className="ml-[5px]" />
                <SpinField className="ml-[11px]" />
                <Sep className="ml-[5px]" />
                <PenBlack className="ml-[7px]" />
                <Drop className="ml-[10px]" />
                <Sep className="ml-[10px]" />
                <Bucket className="ml-[9px]" />
                <Sep className="ml-[9px]" />
                <Combo className="ml-[5px]" width="w-[86px]">
                    <span className="ml-[3px] w-[61px] text-[14px] text-[#3c3c3c]">Color</span>
                </Combo>
                <Combo className="ml-[2px]" width="w-[130px]">
                    <div className="ml-[3px] h-[15px] w-[40px] border border-[#33557f] bg-[#7aa4d1]" />
                    <span className="ml-[6px] w-[59px] text-[19px] leading-none tracking-[0.5px] text-[#222]">[]</span>
                </Combo>
                <Sep className="ml-[5px]" />
                <YellowBox className="ml-[10px]" />
                <Sep className="ml-[12px]" />
                <PointsOff className="ml-[8px]" />
                <Rotate className="ml-[12px]" />
                <AlignIc className="ml-[9px]" />
                <Drop className="ml-[13px]" />
                <Arrange className="ml-[9px]" />
                <Drop className="ml-[12px]" />
                <DistribOff className="ml-[10px]" />
                <Sep className="ml-[9px]" />
                <GlueOff className="ml-[9px]" />
                <Sep className="ml-[9px]" />
                <Dots className="ml-[9px]" />
                <FrameIc className="ml-[10px]" />
            </div>

            {/* work area */}
            <div className="flex h-[530px] shrink-0">
                {/* slide sorter */}
                <div className="flex w-[265px] shrink-0 flex-col pl-[2px]">
                    <div className="flex h-[29px] shrink-0 items-center justify-between border-b border-[#b9b4aa] pl-[1px] pr-[7px] pt-[2px] text-[14px] font-bold text-[#2e2e2e]">
                        <span>Diapositivas</span>
                        <Close className="-mt-[2px]" />
                    </div>
                    <div className="mr-[4px] flex-1 border-x border-b border-l-[#b9b4aa] border-r-transparent border-b-[#cfc8bd] bg-white pl-[8px] pt-[9px]">
                        <div className="flex h-[168px] w-[241px] border border-[#5f7fa6] bg-[linear-gradient(to_bottom,#8aa4c6,#a6c2e6)] pt-[3px]">
                            <div className="w-[24px] pl-[12px] text-[14px] font-bold leading-[18px] text-[#444]">1</div>
                            <div className="flex h-[159px] w-[211px] flex-col border-r-2 border-b border-white shadow-[0_0_2px_rgba(0,0,0,0.6)]">
                                <div className="h-[105px] bg-[#1abc9c]" />
                                <div className="flex-1 bg-[#2c3e50]" />
                            </div>
                        </div>
                        <div className="mt-[14px] flex w-[241px] pl-px">
                            <div className="w-[24px] pl-[12px] text-[14px] font-bold leading-[18px] text-[#888]">2</div>
                            <div className="relative flex h-[160px] w-[211px] flex-col border border-[#8a8a8a] bg-white shadow-[1px_2px_2px_rgba(0,0,0,0.3)]">
                                <div className="h-[33px] border-b border-[#777] bg-[#2c3e50]" />
                                <div className="h-[116px]" />
                                <div className="flex-1 border-t border-[#777] bg-[#2c3e50]" />
                                <div className="absolute bottom-[3px] right-[6px] flex h-[11px] w-[11px] items-center justify-center rounded-full bg-[#1abc9c] text-[6px] font-bold text-white">
                                    2
                                </div>
                            </div>
                        </div>
                    </div>
                </div>

                {/* left splitter */}
                <div className="flex w-[6px] shrink-0 items-center border-x border-[#b9b4aa]">
                    <Svg w={3} h={33}>
                        <path d="M0 .5h3M0 32.500h3M1 6v21" stroke="#6a6a6a" strokeDasharray="1 2" />
                    </Svg>
                </div>

                {/* slide view */}
                <div className="flex w-[749px] shrink-0 flex-col">
                    <div className="flex h-[32px] shrink-0 items-end pl-[8px] text-[14.800px]">
                        <div className="flex h-[29px] w-[60px] items-center justify-center rounded-t-[3px] border border-b-0 border-[#c0b9ac] pb-[2px] tracking-[-0.1px] text-[#222]">
                            Normal
                        </div>
                        {TABS.map(tab => (
                            <div
                                key={tab.label}
                                className={clsx(
                                    'flex h-[27px] items-center justify-center whitespace-nowrap rounded-t-[3px] border border-b-0 border-l-0 border-[#c0b9ac] bg-[#f2efeb] pb-[2px] text-[#3c3c3c]',
                                    tab.width,
                                )}
                            >
                                {tab.label}
                            </div>
                        ))}
                    </div>

                    <div className="flex flex-1">
                        <div className="w-[733px] pl-[55px] pt-[10px]">
                            <div className="flex h-[459px] w-[613px] flex-col shadow-[1px_2px_5px_rgba(0,0,0,0.55)]">
                                <div className="h-[306px] bg-[#1abc9c] pl-[21px] pt-[229px]">
                                    <div className="flex h-[60px] w-[571px] items-center justify-center border border-dashed border-[#a9dccf] pb-[4px] font-['Noto_Sans',sans-serif] text-[31px] font-bold tracking-[0.37px] text-white">
                                        <span>
                                            Pulse para <span className={WAVE}>añadir</span> <span className={WAVE}>un</span>{' '}
                                            <span className={WAVE}>título</span>
                                        </span>
                                    </div>
                                </div>
                                <div className="flex-1 bg-[#2c3e50] pl-[21px] pt-[11px]">
                                    <div className="flex h-[122px] w-[571px] items-center justify-center border border-dashed border-[#b5bbc2] pb-[4px] text-[18px] tracking-[0.13px] text-white">
                                        <span>
                                            Pulse para <span className={WAVE}>añadir</span> <span className={WAVE}>texto</span>
                                        </span>
                                    </div>
                                </div>
                            </div>
                        </div>
                        {/* vertical scrollbar */}
                        <div className="flex w-[15px] flex-col pt-[2px]">
                            <ScrollBtn dir="up" />
                            <div className="h-[108px] border-x border-[#cfcac2] bg-[#e9e5df]" />
                            <div className="flex h-[237px] items-center justify-center border border-[#6f83a0] bg-[linear-gradient(to_right,#80a5d5,#a5c2e6_50%,#80a5d5)]">
                                <Svg w={7} h={7}>
                                    <path d="M0 .5h7M0 3.500h7M0 6.500h7" stroke="#6f83a0" />
                                </Svg>
                            </div>
                            <div className="h-[108px] border-x border-[#cfcac2] bg-[#e9e5df]" />
                            <ScrollBtn dir="down" />
                        </div>
                    </div>

                    {/* horizontal scrollbar */}
                    <div className="flex h-[15px] shrink-0 pl-px">
                        <ScrollBtn dir="left" />
                        <div className="w-[212px] border-y border-[#cfcac2] bg-[#e9e5df]" />
                        <div className="flex w-[280px] items-center justify-center border border-[#6f83a0] bg-[linear-gradient(to_bottom,#80a5d5,#a5c2e6_50%,#80a5d5)] pr-[4px]">
                            <Svg w={7} h={7}>
                                <path d="M.5 0v7M3.500 0v7M6.500 0v7" stroke="#6f83a0" />
                            </Svg>
                        </div>
                        <div className="w-[210px] border-y border-[#cfcac2] bg-[#e9e5df]" />
                        <ScrollBtn dir="right" />
                    </div>
                </div>

                {/* right splitter */}
                <div className="flex w-[8px] shrink-0 items-center">
                    <div className="flex h-full w-[4px] items-center border-x border-[#b9b4aa]">
                        <Svg w={2} h={33}>
                            <path d="M0 .5h2M0 32.500h2M1 6v21" stroke="#6a6a6a" strokeDasharray="1 2" />
                        </Svg>
                    </div>
                </div>

                {/* properties deck */}
                <div className="flex w-[298px] shrink-0 flex-col pb-[4px] pt-[4px]">
                    <div className="flex flex-1 flex-col border border-[#e0ddd6]">
                        <div className="flex h-[26px] shrink-0 items-center justify-between pl-[10px] pr-[5px] text-[14px] font-bold text-[#2a2a2a]">
                            <span>Propiedades</span>
                            <Close />
                        </div>
                        <div className="flex h-[29px] shrink-0 items-center bg-[linear-gradient(to_bottom,#dedbd4,#efebe7)] pl-[6px]">
                            <Svg w={8} h={8}>
                                <path d="M8 0v8H0z" fill="#444" />
                            </Svg>
                            <span className="ml-[5px] text-[14px] font-bold text-[#3c3c3c]">Diseños</span>
                        </div>
                        <div className="-mt-[2px] ml-px grid w-[294px] grid-cols-[repeat(3,98px)] auto-rows-[66px]">
                            {LAYOUTS.map((layout, i) => (
                                <div
                                    key={i}
                                    className={clsx(
                                        'flex border pl-[17px] pt-[8px]',
                                        i === 1 ? 'border-black' : 'border-transparent',
                                    )}
                                >
                                    <LayoutThumb {...layout} />
                                </div>
                            ))}
                        </div>
                    </div>
                </div>

                {/* deck tab bar */}
                <div className="flex w-[40px] shrink-0 flex-col items-center pt-[15px]">
                    <Svg w={12} h={12}>
                        <path d="M1 1.500h9M1 4.500h9M1 7.500h9" stroke="#33557f" />
                        <path d="M6 8.500h6l-3 3z" fill="#111" />
                    </Svg>
                    <div className="mt-[12px] h-px w-[23px] bg-[#d8d4cd]" />
                    <div className="mt-[3px] flex h-[32px] w-[32px] items-center justify-center rounded-[3px] border border-[#c5c1b9]">
                        <Wrench />
                    </div>
                    <BluePanel className="mt-[9px]" />
                    <div className="mt-[14px]">
                        <FilmTab />
                    </div>
                    <CodeOff className="mt-[18px]" color="#3f77bf" />
                    <div className="mt-[18px]">
                        <GridHand />
                    </div>
                    <div className="mt-[14px]">
                        <WindowsTab />
                    </div>
                    <div className="mt-[14px]">
                        <Compass />
                    </div>
                </div>
            </div>

            {/* drawing toolbar */}
            <div className="flex h-[42px] shrink-0 items-center border-t border-white">
                <Grip className="ml-[3px]" />
                <div className="ml-[8px] flex h-[32px] w-[31px] shrink-0 items-center justify-center rounded-[3px] border border-[#b0aca4] bg-[#e2dfda]">
                    <Cursor />
                </div>
                <Sep className="ml-[4px]" />
                <LineIc className="ml-[10px]" />
                <ArrowIc className="ml-[12px]" />
                <RectIc className="ml-[13px]" />
                <EllipseIc className="ml-[12px]" />
                <TextIc className="ml-[11px]" />
                <Sep className="ml-[9px]" />
                <CurveIc className="ml-[7px]" />
                <Drop className="ml-[10px]" />
                <ConnIc className="ml-[12px]" />
                <Drop className="ml-[11px]" />
                <DiamondIc className="ml-[11px]" />
                <Drop className="ml-[10px]" />
                <SmileIc className="ml-[13px]" />
                <Drop className="ml-[11px]" />
                <BlockArrowIc className="ml-[10px]" />
                <Drop className="ml-[8px]" />
                <FlowIc className="ml-[13px]" />
                <Drop className="ml-[9px]" />
                <CalloutIc className="ml-[12px]" />
                <Drop className="ml-[9px]" />
                <StarIc className="ml-[13px]" />
                <Drop className="ml-[10px]" />
                <Sep className="ml-[12px]" />
                <PointsIc className="ml-[8px]" />
                <GluePen className="ml-[12px]" />
                <Sep className="ml-[10px]" />
                <FontworkIc className="ml-[9px]" />
                <Sep className="ml-[12px]" />
                <ExtrudeOff className="ml-[9px]" />
            </div>

            {/* status bar */}
            <div className="flex h-[24px] shrink-0 items-center border-y border-t-[#c9c3b8] border-b-[#d5d0c7] pt-px text-[12px] text-[#3c3c3c]">
                <Sep className="ml-[362px] !h-[18px]" />
                <Svg w={14} h={13} className="ml-[9px]">
                    <path d="M3 0v6M0 3h7" stroke="#2a3fc0" />
                    <path d="M4.500 5.500h9v7h-9z" fill="none" stroke="#444" strokeDasharray="1 1" />
                </Svg>
                <span className="ml-[7px] w-[183px] whitespace-nowrap">28,97 / 21,81</span>
                <Svg w={14} h={13}>
                    <path d="M.5 4.500h9v8h-9z" fill="none" stroke="#444" strokeDasharray="1 1" />
                    <path d="M8 0l3 3 3-3M8 6l3-3 3 3" fill="none" stroke="#444" strokeDasharray="1 1" />
                </Svg>
                <span className="ml-[6px] w-[179px] whitespace-nowrap">0,00 x 0,00</span>
                <Sep className="!h-[18px]" />
                <Svg w={14} h={16} className="ml-[4px]">
                    <path d="M.5 .5h9l4 4v11H.5z" fill="#f4f4ff" stroke="#7a7ae0" />
                    <path d="M3 5h6M3 8h8M3 10.500h8M3 13h8" stroke="#7a7ae0" />
                </Svg>
                <Sep className="ml-[2px] !h-[18px]" />
                <Sep className="ml-[28px] !h-[18px]" />
                <span className="ml-[7px] w-[67px] whitespace-nowrap pl-px tracking-[-0.25px]">Página 1 / 2</span>
                <Sep className="!h-[18px]" />
                <span className="ml-[8px] w-[247px] whitespace-nowrap pl-px tracking-[-0.2px]">midnightblue1</span>
                <Sep className="!h-[18px]" />
                <Svg w={13} h={13} className="ml-[5px]">
                    <path d="M6.500 0l2.500 3H4zM6.500 13L4 10h5zM0 6.500L3 4v5zM13 6.500L10 4v5zM1 6.500h11M6.500 1v11" fill="#222" stroke="#222" />
                </Svg>
                <Sep className="ml-[3px] !h-[18px]" />
                <div className="ml-[9px] h-[2px] w-[8px] bg-[#8c8c8a]" />
                <div className="relative ml-[6px] flex h-[12px] w-[97px] items-center">
                    <div className="h-[2px] w-full bg-[#b5b2ac]" />
                    <div className="absolute left-[47px] top-[2px] h-[8px] w-px bg-[#8c8c8a]" />
                    <div className="absolute left-[22px] top-[2px] h-[8px] w-[8px] rounded-full border border-[#555] bg-white" />
                </div>
                <Svg w={8} h={8} className="ml-[6px]">
                    <path d="M4 0v8M0 4h8" stroke="#777" strokeWidth="1.500" />
                </Svg>
                <Sep className="ml-[8px] !h-[18px]" />
                <span className="ml-[7px] whitespace-nowrap">58 %</span>
            </div>
        </div>
    );
}
